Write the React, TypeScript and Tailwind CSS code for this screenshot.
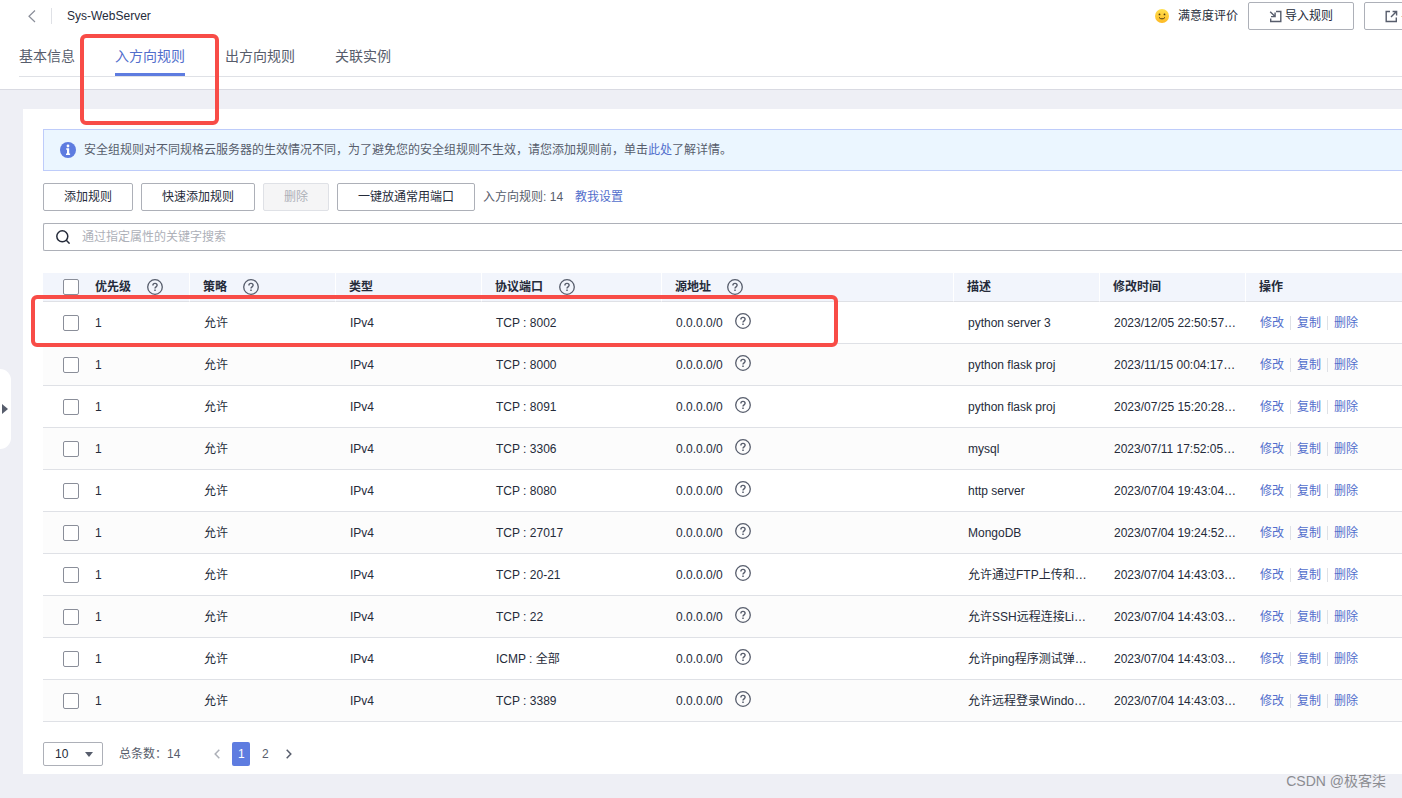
import React, { useState } from 'react';

interface Rule {
  port: string;
  description: string;
  modified: string;
}

const rules: Rule[] = [
  { port: 'TCP : 8002', description: 'python server 3', modified: '2023/12/05 22:50:57…' },
  { port: 'TCP : 8000', description: 'python flask proj', modified: '2023/11/15 00:04:17…' },
  { port: 'TCP : 8091', description: 'python flask proj', modified: '2023/07/25 15:20:28…' },
  { port: 'TCP : 3306', description: 'mysql', modified: '2023/07/11 17:52:05…' },
  { port: 'TCP : 8080', description: 'http server', modified: '2023/07/04 19:43:04…' },
  { port: 'TCP : 27017', description: 'MongoDB', modified: '2023/07/04 19:24:52…' },
  { port: 'TCP : 20-21', description: '允许通过FTP上传和…', modified: '2023/07/04 14:43:03…' },
  { port: 'TCP : 22', description: '允许SSH远程连接Li…', modified: '2023/07/04 14:43:03…' },
  { port: 'ICMP : 全部', description: '允许ping程序测试弹…', modified: '2023/07/04 14:43:03…' },
  { port: 'TCP : 3389', description: '允许远程登录Windo…', modified: '2023/07/04 14:43:03…' },
];

const columns = [
  { title: '优先级', help: true, className: 'w-[95px]' },
  { title: '策略', help: true, className: 'w-[146px] pl-[13px]' },
  { title: '类型', help: false, className: 'w-[146px] pl-[13px]' },
  { title: '协议端口', help: true, className: 'w-[180px] pl-[13px]' },
  { title: '源地址', help: true, className: 'w-[292px] pl-[13px]' },
  { title: '描述', help: false, className: 'w-[146px] pl-[13px]' },
  { title: '修改时间', help: false, className: 'w-[146px] pl-[13px]' },
  { title: '操作', help: false, className: 'pl-[13px]' },
];

const tabs = ['基本信息', '入方向规则', '出方向规则', '关联实例'];

function HelpIcon() {
  return (
    <svg className="size-4 shrink-0" viewBox="0 0 16 16" fill="none" stroke="#575d6c">
      <circle cx="8" cy="8" r="7.3" strokeWidth="1.3" />
      <path d="M5.9 6.5C5.9 5.2 6.8 4.4 8 4.4s2.1.8 2.1 1.9c0 1.5-2.1 1.6-2.1 3.2" strokeWidth="1.4" />
      <path d="M8 10.6v1.5" strokeWidth="1.5" />
    </svg>
  );
}

function SmileIcon() {
  return (
    <svg className="size-3.5" viewBox="0 0 14 14">
      <defs>
        <linearGradient id="smile" x1="0" y1="0" x2="0" y2="1">
          <stop offset="0" stopColor="#ffe04f" />
          <stop offset="1" stopColor="#fdb924" />
        </linearGradient>
      </defs>
      <circle cx="7" cy="7" r="7" fill="url(#smile)" />
      <circle cx="4.5" cy="5.4" r="0.9" fill="#4d3a10" />
      <circle cx="9.5" cy="5.4" r="0.9" fill="#4d3a10" />
      <path d="M4 8.4C5.3 10.4 8.7 10.4 10 8.4" fill="none" stroke="#4d3a10" />
    </svg>
  );
}

function ImportIcon() {
  return (
    <svg className="size-[13px]" viewBox="0 0 13 13" fill="none" stroke="#575d6c" strokeWidth="1.4">
      <path d="M7 1.5h4.8v10H1.7V8.5" />
      <path d="M1.2 1.7l4.6 4.6M6.1 2.6v4H2" />
    </svg>
  );
}

function ExportIcon() {
  return (
    <svg className="size-[13px]" viewBox="0 0 13 13" fill="none" stroke="#575d6c" strokeWidth="1.4">
      <path d="M5 1.5H1.2v10h10.1V7.5" />
      <path d="M6 7l5.2-5.2M7.6 1.5h4v4" />
    </svg>
  );
}

function Checkbox({ label, checked, onChange }: { label: string; checked: boolean; onChange: () => void }) {
  return (
    <input
      type="checkbox"
      aria-label={label}
      checked={checked}
      onChange={onChange}
      className="block size-4 appearance-none rounded-xs border border-[#8a8e99] bg-white checked:border-[#5e7ce0] checked:bg-[#5e7ce0]"
    />
  );
}

function Button({ children, disabled }: { children: React.ReactNode; disabled?: boolean }) {
  return (
    <button
      disabled={disabled}
      className="flex h-7 shrink-0 items-center gap-[3px] rounded-xs border border-[#adb0b8] bg-white px-5 whitespace-nowrap text-[#252b3a] disabled:border-[#dfe1e6] disabled:bg-[#f5f5f6] disabled:text-[#adb0b8]"
    >
      {children}
    </button>
  );
}

export default function App() {
  const [activeTab, setActiveTab] = useState('入方向规则');
  const [selected, setSelected] = useState<number[]>([]);
  const [page, setPage] = useState(1);

  const toggle = (i: number) =>
    setSelected(selected.includes(i) ? selected.filter((s) => s !== i) : [...selected, i]);
  const allSelected = selected.length === rules.length;

  return (
    <div className="relative min-h-screen overflow-hidden bg-[#eeeff5] pb-6 font-['Liberation_Sans','Noto_Sans_CJK_SC',sans-serif] text-xs text-[#252b3a]">
      <header className="border-b border-[#d9dae2] bg-white pt-0.5 pb-3 pl-[19px]">
        <div className="-mr-[68px] flex h-7 items-center">
          <button aria-label="返回" className="pl-2">
            <svg className="h-3.5 w-2.5" viewBox="0 0 10 14" fill="none" stroke="#8a8e99" strokeWidth="1.2">
              <path d="M8 1.5L2 7.2L8 13" />
            </svg>
          </button>
          <span className="ml-3.5 h-4 w-px bg-[#dfe1e6]" />
          <h1 className="ml-[15px]">Sys-WebServer</h1>
          <div className="ml-auto flex shrink-0 items-center gap-2.5">
            <a href="#feedback" className="flex items-center gap-[9px]">
              <SmileIcon />
              满意度评价
            </a>
            <Button>
              <ImportIcon />
              导入规则
            </Button>
            <Button>
              <ExportIcon />
              导出规则
            </Button>
          </div>
        </div>

        <nav className="flex gap-10 border-b border-[#dfe1e6] text-sm">
          {tabs.map((tab) => (
            <div key={tab} className="relative">
              <button
                onClick={() => setActiveTab(tab)}
                className={`block border-b-3 pt-[15px] pb-1.5 leading-[22px] ${
                  tab === activeTab ? 'border-[#5e7ce0] text-[#526ecc]' : 'border-transparent text-[#575d6c]'
                }`}
              >
                {tab}
              </button>
              {tab === '入方向规则' && (
                <div className="pointer-events-none absolute top-1 -left-[35px] z-10 h-[91px] w-[139px] rounded-md border-4 border-[#f84c47]" />
              )}
            </div>
          ))}
        </nav>
      </header>

      {/* Drawer handle */}
      <button
        aria-label="展开"
        className="absolute top-[369px] left-0 flex h-20 w-[11px] items-center rounded-r-xl bg-white pl-0.5"
      >
        <svg className="h-2.5 w-1.5" viewBox="0 0 6 10" fill="#575d6c">
          <path d="M0 0l6 5-6 5z" />
        </svg>
      </button>

      <main className="mt-[19px] ml-[23px] bg-white pt-5 pb-2 pl-5">
        <div className="flex h-[42px] items-center gap-2 border border-r-0 border-[#beccfa] bg-[#ebf6ff] pl-4 text-[#575d6c]">
          <svg className="size-4" viewBox="0 0 16 16">
            <circle cx="8" cy="8" r="8" fill="#5e7ce0" />
            <circle cx="8" cy="4" r="1.4" fill="#fff" />
            <path d="M6.2 6.3H9.2v5.2h.9v1.4H6v-1.4h1V7.7h-.8z" fill="#fff" />
          </svg>
          <p>
            安全组规则对不同规格云服务器的生效情况不同，为了避免您的安全组规则不生效，请您添加规则前，单击
            <a href="#rules" className="text-[#526ecc]">此处</a>
            了解详情。
          </p>
        </div>

        <div className="mt-3 flex items-center gap-2">
          <Button>添加规则</Button>
          <Button>快速添加规则</Button>
          <Button disabled>删除</Button>
          <Button>一键放通常用端口</Button>
          <span className="text-[#575d6c]">入方向规则: 14</span>
          <a href="#guide" className="ml-1 text-[#526ecc]">教我设置</a>
        </div>

        <label className="mt-3 flex h-7 items-center gap-3 rounded-l-xs border border-r-0 border-[#adb0b8] pl-3">
          <svg className="size-3.5" viewBox="0 0 14 14" fill="none" stroke="#252b3a" strokeWidth="1.5">
            <circle cx="6.3" cy="6.3" r="5.5" />
            <path d="M10.3 10.3l3.3 3.3" />
          </svg>
          <input
            aria-label="搜索"
            placeholder="通过指定属性的关键字搜索"
            className="h-full flex-1 outline-none placeholder:text-[#adb0b8]"
          />
        </label>

        <div className="relative mt-[22px]">
          <table className="w-full table-fixed border-separate border-spacing-0 text-left">
            <thead>
              <tr className="h-[29px] bg-[#f2f5fc]">
                <th className="w-[52px] border-b border-[#dfe1e6] pl-5">
                  <Checkbox
                    label="全选"
                    checked={allSelected}
                    onChange={() => setSelected(allSelected ? [] : rules.map((_, i) => i))}
                  />
                </th>
                {columns.map((col) => (
                  <th
                    key={col.title}
                    className={`border-r border-b border-r-white border-b-[#dfe1e6] last:border-r-0 ${col.className}`}
                  >
                    <div className="flex items-center gap-4">
                      {col.title}
                      {col.help && <HelpIcon />}
                    </div>
                  </th>
                ))}
              </tr>
            </thead>
            <tbody className="[&_td]:border-b [&_td]:border-[#dfe1e6]">
              {rules.map((rule, i) => (
                <tr key={i} className="h-[42px] even:bg-[#fcfcfc]">
                  <td className="pl-5">
                    <Checkbox label={`选择规则 ${i + 1}`} checked={selected.includes(i)} onChange={() => toggle(i)} />
                  </td>
                  <td>1</td>
                  <td className="pl-3.5">允许</td>
                  <td className="pl-3.5">IPv4</td>
                  <td className="pl-3.5">{rule.port}</td>
                  <td className="pl-3.5">
                    <div className="flex items-start gap-3 leading-5">
                      0.0.0.0/0
                      <HelpIcon />
                    </div>
                  </td>
                  <td className="truncate pl-3.5">{rule.description}</td>
                  <td className="truncate pl-3.5">{rule.modified}</td>
                  <td className="pl-3.5">
                    <div className="flex items-center gap-1.5 text-[#526ecc]">
                      <a href="#edit">修改</a>
                      <span className="h-3.5 w-px bg-[#dfe1e6]" />
                      <a href="#copy">复制</a>
                      <span className="h-3.5 w-px bg-[#dfe1e6]" />
                      <a href="#delete">删除</a>
                    </div>
                  </td>
                </tr>
              ))}
            </tbody>
          </table>
          <div className="pointer-events-none absolute top-[22px] -left-3 h-[52px] w-[807px] rounded-md border-4 border-[#f84c47]" />
        </div>

        <div className="mt-5 flex items-center text-[#575d6c]">
          <div className="relative">
            <select
              aria-label="每页条数"
              className="block h-6 w-[60px] appearance-none rounded-xs border border-[#adb0b8] bg-white pl-[11px] text-[#252b3a]"
            >
              <option>10</option>
              <option>20</option>
              <option>50</option>
            </select>
            <svg className="pointer-events-none absolute top-2.5 right-2.5 h-[5px] w-2" viewBox="0 0 8 5" fill="#575d6c">
              <path d="M0 0h8L4 5z" />
            </svg>
          </div>
          <span className="ml-4">总条数：14</span>
          <div className="ml-7 flex gap-1.5">
            <button aria-label="上一页" className="flex h-6 w-[18px] items-center justify-center" onClick={() => setPage(1)}>
              <svg className="h-2.5 w-1.5" viewBox="0 0 6 10" fill="none" stroke="#adb0b8" strokeWidth="1.5">
                <path d="M5.3 .8L1.2 5l4.1 4.2" />
              </svg>
            </button>
            {[1, 2].map((n) => (
              <button
                key={n}
                onClick={() => setPage(n)}
                className={`h-6 w-[18px] rounded-xs ${n === page ? 'bg-[#5e7ce0] text-white' : ''}`}
              >
                {n}
              </button>
            ))}
            <button aria-label="下一页" className="flex h-6 w-[18px] items-center justify-center" onClick={() => setPage(2)}>
              <svg className="h-2.5 w-1.5" viewBox="0 0 6 10" fill="none" stroke="#575d6c" strokeWidth="1.5">
                <path d="M.7 .8L4.8 5L.7 9.2" />
              </svg>
            </button>
          </div>
        </div>
      </main>

      <span className="absolute right-4 bottom-2 text-sm leading-[18px] text-[#8b8c91]">CSDN @极客柒</span>
    </div>
  );
}
